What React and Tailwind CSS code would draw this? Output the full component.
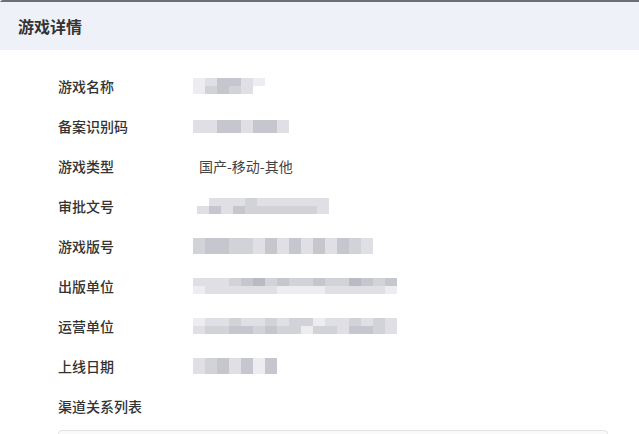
import React from 'react'

const shade = {
  w: 'bg-white',
  a: 'bg-[#ededf1]',
  b: 'bg-[#dfdfe5]',
  c: 'bg-[#d2d2d9]',
  d: 'bg-[#c6c6ce]',
  e: 'bg-[#babac3]',
}

// pixelated (mosaic) placeholders for the hidden values
function Mosaic({ rows, cell = 'h-2' }) {
  return (
    <div className="flex flex-col">
      {rows.map((r, i) => (
        <div key={i} className="flex">
          {r.split('').map((k, j) => (
            <div key={j} className={`w-3 ${cell} ${shade[k]}`} />
          ))}
        </div>
      ))}
    </div>
  )
}

const fields = [
  { label: '游戏名称', mosaic: { rows: ['abddba', 'acdcbw'] } },
  { label: '备案识别码', mosaic: { rows: ['bbddbddb'], cell: 'h-[13px]' } },
  { label: '游戏类型', text: '国产-移动-其他' },
  { label: '审批文号', mosaic: { rows: ['wbbbcbbbbbbw', 'bdbdccccccbw'] }, pad: 'pl-1' },
  { label: '游戏版号', mosaic: { rows: ['cddccbdbdbdbdcb', 'cddccbdbdbdbdcb'] } },
  { label: '出版单位', mosaic: { rows: ['bbbcdecdccdccedcd', 'abbbbbbaaaabbbbba'] } },
  { label: '运营单位', mosaic: { rows: ['abbcbbcbccabbcbcb', 'bccddcdccaccbddcb'] } },
  { label: '上线日期', mosaic: { rows: ['bcdbdad', 'bcdbdad'] } },
]

export default function App() {
  return (
    <div className="w-[639px] h-[434px] overflow-hidden bg-white font-['Noto_Sans_CJK_SC','Microsoft_YaHei',sans-serif]">
      <div className="border-t-2 border-[#6c6f74] rounded-tl-[3px]">
        <div className="h-12 bg-[#eef1f8] flex items-center px-[18px]">
          <h2 className="text-base font-bold text-[#333]">游戏详情</h2>
        </div>
      </div>

      <div className="pt-4 pl-[58px]">
        {fields.map((f) => (
          <div key={f.label} className="h-10 flex items-center">
            <span className="w-[135px] text-sm font-medium text-[#333]">{f.label}</span>
            {f.text ? (
              <span className="pl-1.5 text-sm text-[#444]">{f.text}</span>
            ) : (
              <div className={f.pad}>
                <Mosaic {...f.mosaic} />
              </div>
            )}
          </div>
        ))}
        <div className="h-10 flex items-center">
          <span className="text-sm font-medium text-[#333]">渠道关系列表</span>
        </div>
        <div className="mt-1 w-[550px] h-10 rounded border border-[#e3e3e3] bg-[#fafafa]" />
      </div>
    </div>
  )
}
